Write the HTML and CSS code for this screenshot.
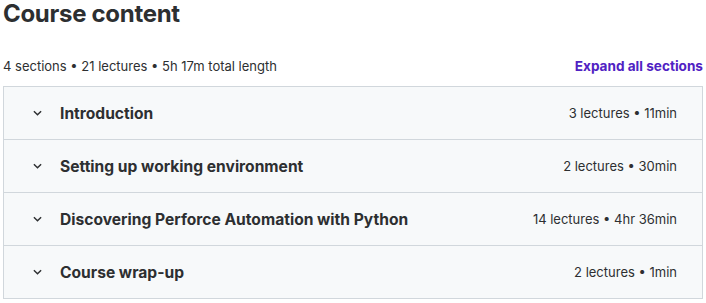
FILE: index.html
```html
<!DOCTYPE html>
<html lang="en">
<head>
    <meta charset="UTF-8" />
    <title>Course content</title>
    <link rel="stylesheet" href="styles.css">
</head>
<body>

<div class="course-content">
    <h2 class="title">Course content</h2>

    <div class="summary">
        <span>4 sections • 21 lectures • 5h 17m total length</span>
        <button class="expand">Expand all sections</button>
    </div>

    <div class="sections">
        <div class="section">
            <svg class="chevron" viewBox="0 0 10 6"><path d="M1 1l4 4 4-4" /></svg>
            <span class="section-title">Introduction</span>
            <span class="section-meta">3 lectures • 11min</span>
        </div>
        <div class="section">
            <svg class="chevron" viewBox="0 0 10 6"><path d="M1 1l4 4 4-4" /></svg>
            <span class="section-title">Setting up working environment</span>
            <span class="section-meta">2 lectures • 30min</span>
        </div>
        <div class="section">
            <svg class="chevron" viewBox="0 0 10 6"><path d="M1 1l4 4 4-4" /></svg>
            <span class="section-title">Discovering Perforce Automation with Python</span>
            <span class="section-meta">14 lectures • 4hr 36min</span>
        </div>
        <div class="section">
            <svg class="chevron" viewBox="0 0 10 6"><path d="M1 1l4 4 4-4" /></svg>
            <span class="section-title">Course wrap-up</span>
            <span class="section-meta">2 lectures • 1min</span>
        </div>
    </div>
</div>

</body>
</html>
```

FILE: styles.css
```css
body, html {
    margin: 0;
    background-color: #fff;
    font-family: Inter, "Noto Sans", sans-serif;
    color: #2d2f31;
}

.course-content {
    width: 700px;
    padding: 0 0 0 3px;
}

.title {
    margin: 0;
    font-size: 24px;
    font-weight: 700;
    line-height: 28px;
    letter-spacing: -0.3px;
}

.summary {
    display: flex;
    justify-content: space-between;
    align-items: center;
    margin-top: 28px;
    height: 20px;
    font-size: 13px;
}

.expand {
    border: none;
    background: none;
    padding: 0;
    font-family: inherit;
    font-size: 13.6px;
    font-weight: 700;
    color: #5022c3;
    cursor: pointer;
}

.sections {
    margin-top: 10px;
    border: 1px solid #d1d7dc;
    border-bottom: none;
}

.section {
    display: flex;
    align-items: center;
    height: 52px;
    padding: 0 25px 0 29px;
    background-color: #f7f9fa;
    border-bottom: 1px solid #d1d7dc;
}

.chevron {
    width: 9px;
    height: 6px;
    margin-right: 18px;
    fill: none;
    stroke: #2d2f31;
    stroke-width: 1.6;
}

.section-title {
    flex: 1;
    font-size: 15.6px;
    font-weight: 700;
}

.section-meta {
    font-size: 13px;
}
```
